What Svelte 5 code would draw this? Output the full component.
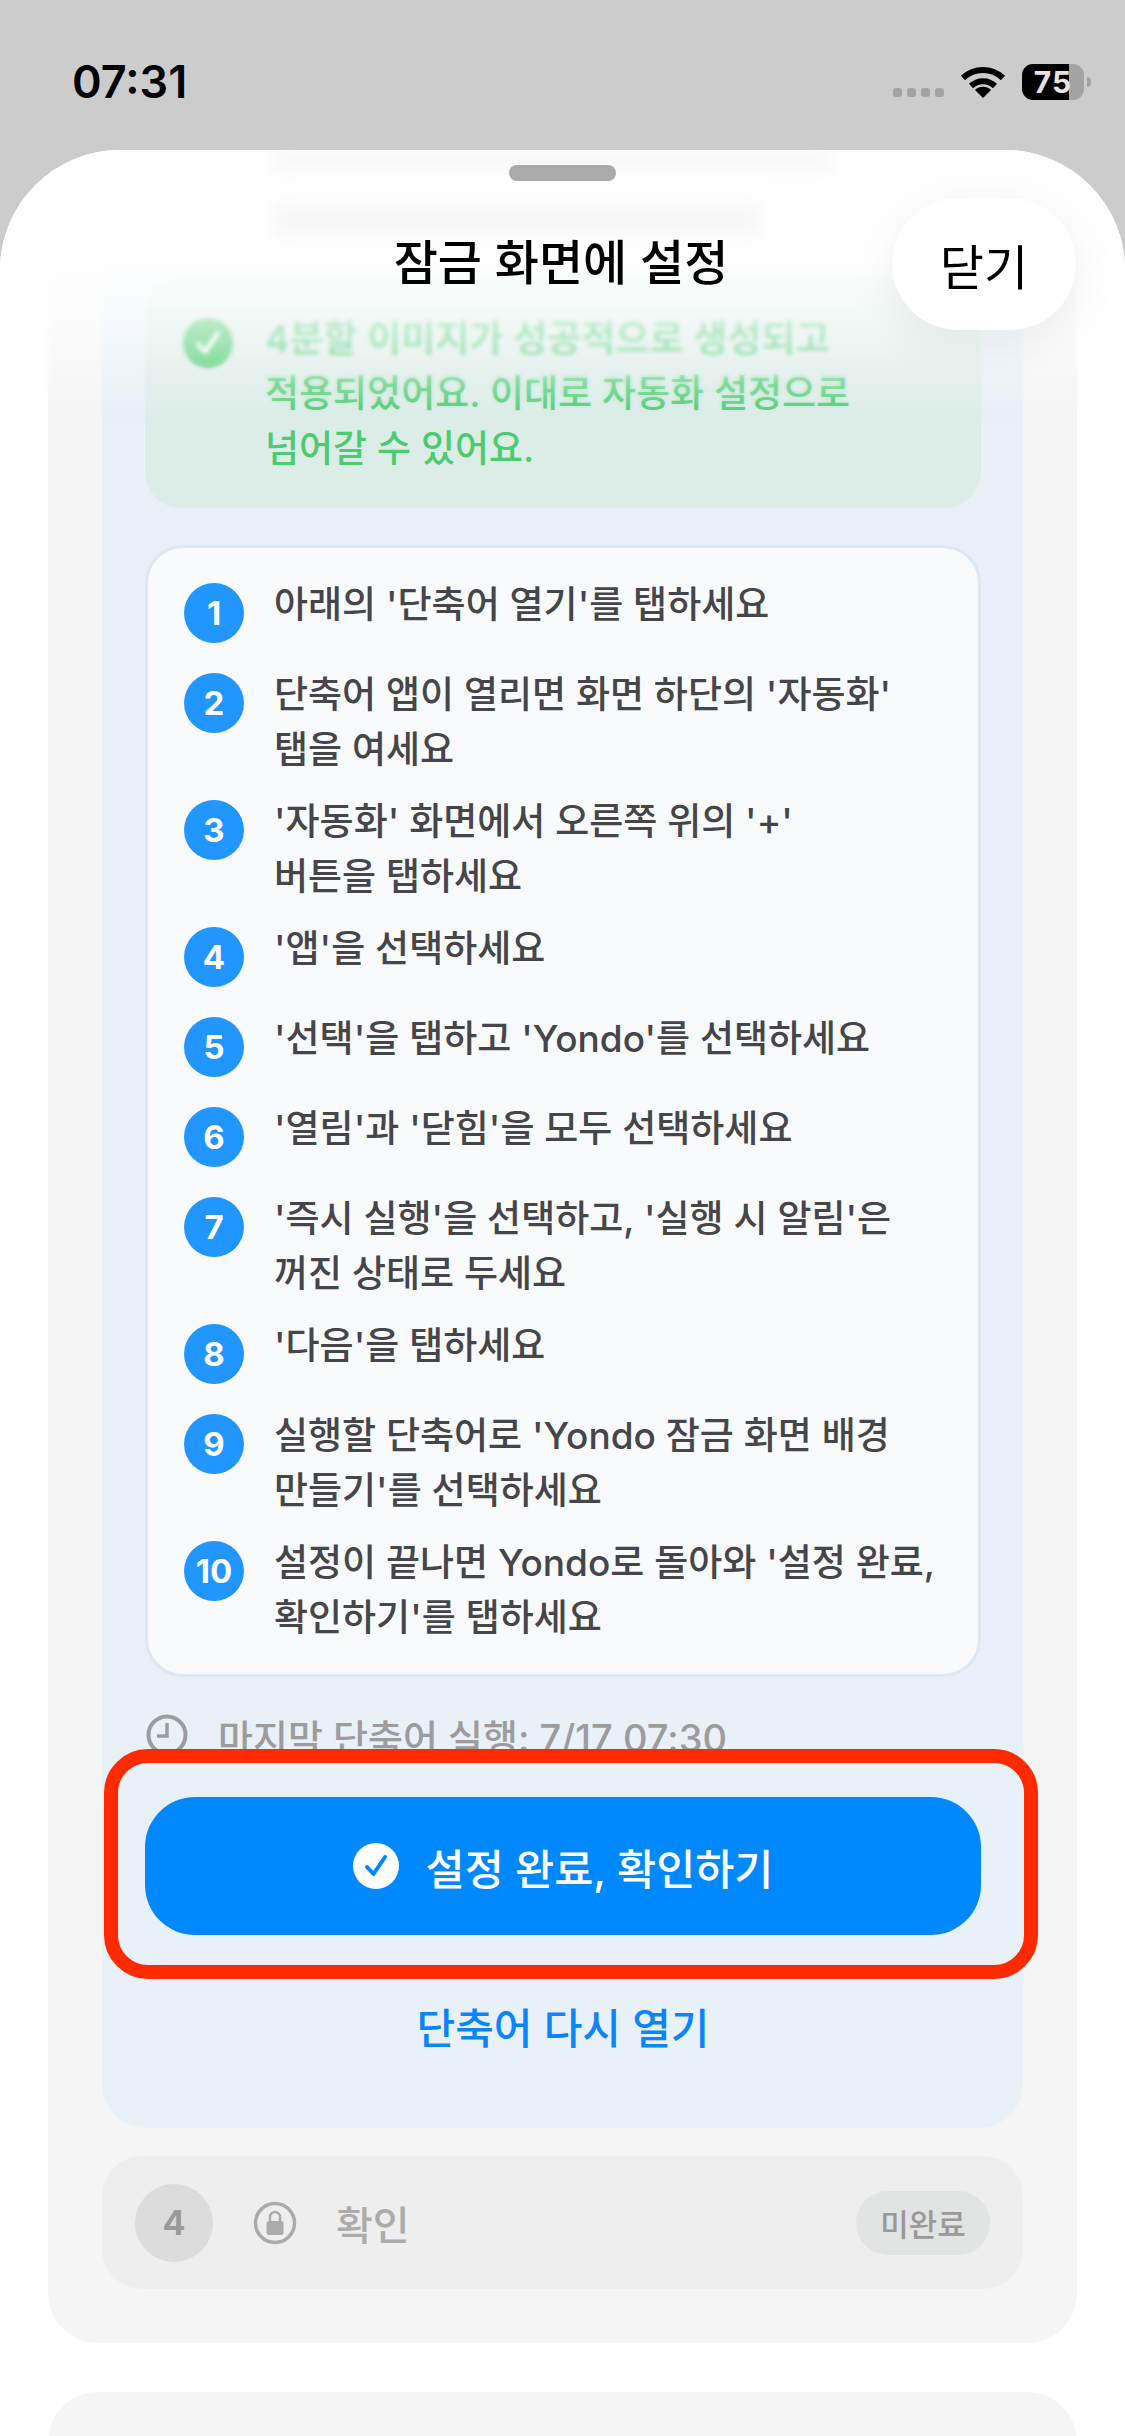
<script>
  const steps = [
    ["아래의 '단축어 열기'를 탭하세요"],
    ["단축어 앱이 열리면 화면 하단의 '자동화'", "탭을 여세요"],
    ["'자동화' 화면에서 오른쪽 위의 '+'", "버튼을 탭하세요"],
    ["'앱'을 선택하세요"],
    ["'선택'을 탭하고 'Yondo'를 선택하세요"],
    ["'열림'과 '닫힘'을 모두 선택하세요"],
    ["'즉시 실행'을 선택하고, '실행 시 알림'은", "꺼진 상태로 두세요"],
    ["'다음'을 탭하세요"],
    ["실행할 단축어로 'Yondo 잠금 화면 배경", "만들기'를 선택하세요"],
    ["설정이 끝나면 Yondo로 돌아와 '설정 완료,", "확인하기'를 탭하세요"],
  ];
</script>

<div class="screen">
  <div class="status">
    <span class="time">07:31</span>
    <div class="status-right">
      <div class="dots"><i></i><i></i><i></i><i></i></div>
      <svg class="wifi" width="46" height="34" viewBox="0 0 46 34">
        <path d="M3 13 A29 29 0 0 1 43 13" fill="none" stroke="#000" stroke-width="6" />
        <path d="M11 21 A17.5 17.5 0 0 1 35 21" fill="none" stroke="#000" stroke-width="6" />
        <path d="M23 33 L15 25 A11.5 11.5 0 0 1 31 25 Z" fill="#000" />
      </svg>
      <div class="battery"><div class="battery-body"><span>75</span></div><b></b></div>
    </div>
  </div>

  <div class="sheet">
    <div class="ghost"><i></i><i class="short"></i></div>
    <div class="blur"></div>
    <div class="fade"></div>
    <div class="grabber"></div>
    <div class="title">잠금 화면에 설정</div>
    <div class="close">닫기</div>

    <section class="outer">
      <div class="active">
        <div class="success">
          <svg class="success-icon" width="50" height="50" viewBox="0 0 50 50">
            <circle cx="25" cy="25" r="25" fill="#4ccb70" />
            <path d="M15 26 L22 34 L35 15" fill="none" stroke="#fff" stroke-width="4" stroke-linecap="round" stroke-linejoin="round" />
          </svg>
          <p>4분할 이미지가 성공적으로 생성되고<br />적용되었어요. 이대로 자동화 설정으로<br />넘어갈 수 있어요.</p>
        </div>

        <div class="steps">
          {#each steps as lines, i}
            <div class="step">
              <span class="num">{i + 1}</span>
              <div class="step-text">
                {#each lines as line}<div>{line}</div>{/each}
              </div>
            </div>
          {/each}
        </div>

        <div class="last-run">
          <svg width="42" height="42" viewBox="0 0 42 42">
            <circle cx="21" cy="21" r="18.5" fill="none" stroke="#9c9c9c" stroke-width="4" />
            <path d="M21 9 V22 H11" fill="none" stroke="#9c9c9c" stroke-width="3.5" />
          </svg>
          <span>마지막 단축어 실행: 7/17 07:30</span>
        </div>

        <div class="cta">
          <div class="highlight"></div>
          <button class="done">
            <svg width="46" height="46" viewBox="0 0 46 46">
              <circle cx="23" cy="23" r="23" fill="#fff" />
              <path d="M14 24 L20.500 31 L32 14" fill="none" stroke="#0088ff" stroke-width="4" stroke-linecap="round" stroke-linejoin="round" />
            </svg>
            설정 완료, 확인하기
          </button>
        </div>

        <div class="reopen">단축어 다시 열기</div>
      </div>

      <div class="locked">
        <span class="locked-num">4</span>
        <svg width="44" height="44" viewBox="0 0 44 44">
          <circle cx="22" cy="22" r="19.500" fill="none" stroke="#ababab" stroke-width="3.500" />
          <rect x="13.500" y="20" width="17" height="14" rx="2.500" fill="#ababab" />
          <path d="M17 20 V16 A5 5 0 0 1 27 16 V20" fill="none" stroke="#ababab" stroke-width="2.500" />
        </svg>
        <span class="locked-label">확인</span>
        <span class="pill">미완료</span>
      </div>
    </section>

    <section class="next"></section>
  </div>
</div>

<style>
  :global(body) {
    margin: 0;
    background: #cccccc;
  }
  .screen {
    width: 1125px;
    height: 2436px;
    overflow: hidden;
    font-family: Inter, "Noto Sans CJK KR", sans-serif;
    display: flex;
    flex-direction: column;
  }
  .status {
    height: 150px;
    flex: none;
    display: flex;
    justify-content: space-between;
    box-sizing: border-box;
    padding: 54px 34px 0 72px;
  }
  .time {
    font-size: 45px;
    font-weight: 600;
    line-height: 56px;
    color: #000;
  }
  .status-right {
    display: flex;
    align-items: flex-start;
    padding-top: 10px;
  }
  .dots {
    display: flex;
    gap: 5px;
    margin-top: 24px;
    margin-right: 16px;
  }
  .dots i {
    width: 9px;
    height: 9px;
    border-radius: 3px;
    background: #a3a3a3;
  }
  .wifi {
    margin-top: 1px;
    margin-right: 16px;
  }
  .battery {
    display: flex;
    align-items: center;
    gap: 3px;
  }
  .battery-body {
    width: 62px;
    height: 36px;
    border-radius: 11px;
    background: linear-gradient(90deg, #000 47px, #a3a3a3 47px);
    display: flex;
    align-items: center;
    justify-content: center;
  }
  .battery-body span {
    font-size: 30px;
    font-weight: 700;
    color: #e4e4e4;
    letter-spacing: 1px;
  }
  .battery b {
    width: 4px;
    height: 10px;
    border-radius: 0 4px 4px 0;
    background: #a3a3a3;
  }

  .sheet {
    position: relative;
    flex: 1;
    background: #fff;
    border-radius: 120px 120px 0 0;
    overflow: hidden;
  }
  .ghost {
    position: absolute;
    z-index: 2;
    top: 0;
    left: 272px;
    display: flex;
    flex-direction: column;
    gap: 35px;
    filter: blur(9px);
  }
  .ghost i {
    display: block;
    width: 560px;
    height: 20px;
    background: #f6f6f6;
  }
  .ghost i.short {
    width: 490px;
    height: 30px;
  }
  .blur {
    position: absolute;
    z-index: 1;
    top: 100px;
    left: 0;
    right: 0;
    height: 170px;
    backdrop-filter: blur(2px);
    mask-image: linear-gradient(#000 60%, transparent);
  }
  .fade {
    position: absolute;
    z-index: 1;
    top: 0;
    left: 0;
    right: 0;
    height: 265px;
    background: linear-gradient(#fff 0, #fff 38%, rgba(255, 255, 255, 0.5) 72%, rgba(255, 255, 255, 0) 100%);
  }
  .grabber {
    position: absolute;
    z-index: 3;
    top: 15px;
    left: 509px;
    width: 107px;
    height: 16px;
    border-radius: 8px;
    background: #aaaaaa;
  }
  .title {
    position: absolute;
    z-index: 3;
    top: 78px;
    left: 0;
    width: 1122px;
    text-align: center;
    font-size: 48px;
    font-weight: 500;
    line-height: 70px;
    color: #000;
  }
  .close {
    position: absolute;
    z-index: 3;
    top: 48px;
    left: 892px;
    width: 184px;
    height: 132px;
    border-radius: 66px;
    background: #fff;
    box-shadow: 0 10px 50px rgba(0, 0, 0, 0.07);
    display: flex;
    align-items: center;
    justify-content: center;
    font-size: 48px;
    color: #000;
  }

  .outer {
    margin: 0 48px;
    padding: 0 54px 54px;
    background: #f5f5f5;
    border-radius: 0 0 50px 50px;
  }
  .active {
    padding: 129px 42px 69px 43px;
    background: #e8f0f8;
    border-radius: 0 0 44px 44px;
  }
  .success {
    display: flex;
    gap: 32px;
    height: 229px;
    box-sizing: border-box;
    padding: 32px 38px;
    background: #dcede8;
    border-radius: 36px;
  }
  .success-icon {
    flex: none;
    margin-top: 7px;
  }
  .success p {
    margin: 0;
    font-size: 37px;
    font-weight: 500;
    line-height: 55px;
    color: #4ccb70;
  }
  .steps {
    margin-top: 37px;
    height: 1132px;
    box-sizing: border-box;
    padding: 29px 36px 0;
    background: #f8fafc;
    border: 3px solid #dbe9f6;
    border-radius: 38px;
    display: flex;
    flex-direction: column;
    gap: 24px;
  }
  .step {
    display: flex;
    align-items: flex-start;
    gap: 30px;
  }
  .num {
    flex: none;
    width: 60px;
    height: 60px;
    margin-top: 6px;
    border-radius: 50%;
    background: #2196ff;
    display: flex;
    align-items: center;
    justify-content: center;
    font-size: 33px;
    font-weight: 700;
    color: #fff;
  }
  .step-text {
    font-size: 37px;
    font-weight: 500;
    line-height: 55px;
    margin-bottom: -7px;
    color: #45454a;
    white-space: nowrap;
  }
  .last-run {
    display: flex;
    align-items: center;
    gap: 30px;
    height: 60px;
    margin-top: 28px;
    padding-left: 1px;
    font-size: 38px;
    color: #9c9c9c;
    font-weight: 500;
  }
  .cta {
    position: relative;
    margin-top: 32px;
  }
  .highlight {
    position: absolute;
    top: -48px;
    bottom: -44px;
    left: -41px;
    right: -57px;
    box-sizing: border-box;
    border: 14px solid #ff2a00;
    border-radius: 44px;
    background: #e8f0f8;
  }
  .done {
    position: relative;
    display: flex;
    align-items: center;
    justify-content: center;
    gap: 27px;
    width: 100%;
    height: 138px;
    border: none;
    border-radius: 50px;
    background: #0088ff;
    color: #fff;
    font-family: inherit;
    font-size: 42.500px;
    font-weight: 500;
  }
  .reopen {
    margin-top: 64px;
    line-height: 60px;
    text-align: center;
    font-size: 42px;
    font-weight: 500;
    color: #0a84ff;
  }
  .locked {
    display: flex;
    align-items: center;
    height: 133px;
    box-sizing: border-box;
    margin-top: 28px;
    padding: 0 33px;
    background: #eeeeee;
    border-radius: 40px;
  }
  .locked-num {
    width: 78px;
    height: 78px;
    border-radius: 50%;
    background: #dcdcdc;
    display: flex;
    align-items: center;
    justify-content: center;
    font-size: 34px;
    font-weight: 700;
    color: #9a9a9a;
  }
  .locked svg {
    margin-left: 40px;
  }
  .locked-label {
    margin-left: 39px;
    font-size: 40px;
    font-weight: 500;
    color: #ababab;
  }
  .pill {
    margin-left: auto;
    width: 134px;
    height: 64px;
    border-radius: 32px;
    background: #e2e3e3;
    display: flex;
    align-items: center;
    justify-content: center;
    font-size: 31px;
    font-weight: 500;
    color: #999;
  }
  .next {
    margin: 49px 48px 0;
    height: 200px;
    background: #f5f5f5;
    border-radius: 50px 50px 0 0;
  }
</style>
